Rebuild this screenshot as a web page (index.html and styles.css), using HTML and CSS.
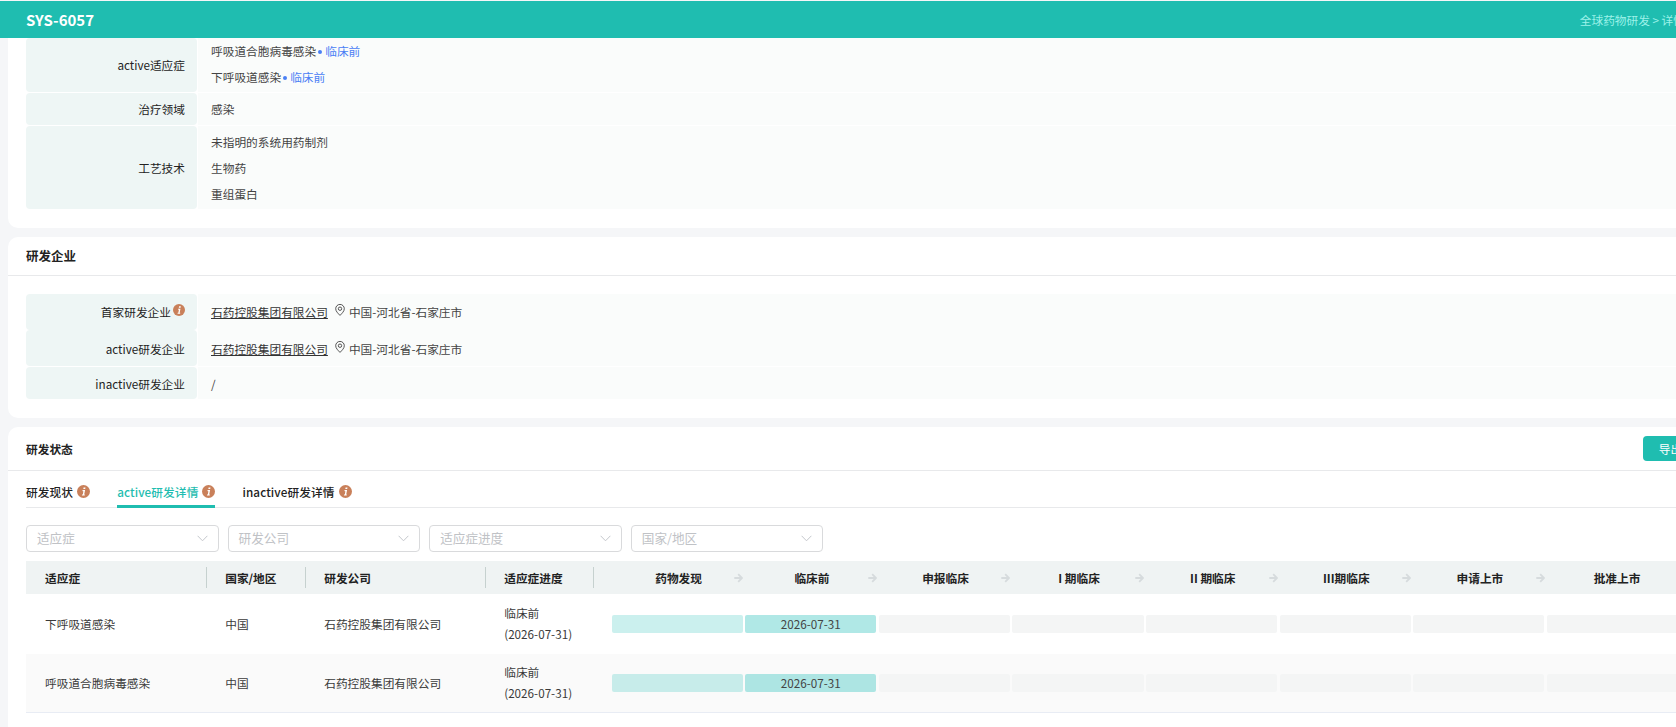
FILE: index.html
```html
<!DOCTYPE html>
<html lang="zh-CN">
<head>
    <meta charset="UTF-8">
    <meta name="viewport" content="width=device-width, initial-scale=1.0">
    <title>SYS-6057</title>
    <link rel="stylesheet" href="styles.css">
</head>
<body>
    <svg class="icon-defs" width="0" height="0">
        <defs>
            <symbol id="info" viewBox="0 0 13 13">
                <circle cx="6.5" cy="6.5" r="6.5" fill="#c9805a"/>
                <path d="M6.6 2.4h1.9l-.3 1.6H6.3zM5.4 5.1h2.7L7.2 9.4h.7l-.2 1.2H4.9l.2-1.2h.7l.6-3.1h-.7z" fill="#fff"/>
            </symbol>
            <symbol id="pin" viewBox="0 0 10 12">
                <path d="M5 11.4C3 9.3.7 7.3.7 4.7a4.3 4.3 0 0 1 8.6 0c0 2.6-2.3 4.6-4.3 6.7z" fill="none" stroke="#444" stroke-width=".9"/>
                <circle cx="5" cy="4.7" r="1.7" fill="none" stroke="#444" stroke-width=".9"/>
            </symbol>
            <symbol id="arrow" viewBox="0 0 9 10">
                <path d="M.3 5h7M4.2 1.2 8 5 4.2 8.8" fill="none" stroke="#d6dbdd" stroke-width="1.8"/>
            </symbol>
            <symbol id="chevron" viewBox="0 0 11 7">
                <path d="M.6.8 5.5 5.8 10.4.8" fill="none" stroke="#c4c7cc"/>
            </symbol>
        </defs>
    </svg>

    <div class="page">
        <header class="topbar">
            <span class="topbar-title">SYS-6057</span>
            <span class="breadcrumb">全球药物研发 &gt; 详情</span>
        </header>

        <section class="card card-first">
            <div class="desc">
                <div class="desc-row row-indication">
                    <div class="desc-label">active适应症</div>
                    <div class="desc-value stacked">
                        <div>呼吸道合胞病毒感染<i class="dot"></i><span class="stage-link">临床前</span></div>
                        <div>下呼吸道感染<i class="dot"></i><span class="stage-link">临床前</span></div>
                    </div>
                </div>
                <div class="desc-row row-area">
                    <div class="desc-label">治疗领域</div>
                    <div class="desc-value">感染</div>
                </div>
                <div class="desc-row row-tech">
                    <div class="desc-label">工艺技术</div>
                    <div class="desc-value stacked">
                        <div>未指明的系统用药制剂</div>
                        <div>生物药</div>
                        <div>重组蛋白</div>
                    </div>
                </div>
            </div>
        </section>

        <section class="card card-company">
            <div class="card-head">
                <h2 class="title-company">研发企业</h2>
            </div>
            <div class="desc desc-company">
                <div class="desc-row row-company joined">
                    <div class="desc-label">首家研发企业<svg class="info-small"><use href="#info"/></svg></div>
                    <div class="desc-value">
                        <a class="company-link">石药控股集团有限公司</a>
                        <svg class="pin"><use href="#pin"/></svg>
                        <span>中国-河北省-石家庄市</span>
                    </div>
                </div>
                <div class="desc-row row-company">
                    <div class="desc-label">active研发企业</div>
                    <div class="desc-value">
                        <a class="company-link">石药控股集团有限公司</a>
                        <svg class="pin"><use href="#pin"/></svg>
                        <span>中国-河北省-石家庄市</span>
                    </div>
                </div>
                <div class="desc-row row-inactive">
                    <div class="desc-label">inactive研发企业</div>
                    <div class="desc-value">/</div>
                </div>
            </div>
        </section>

        <section class="card card-status">
            <div class="card-head head-status">
                <h2>研发状态</h2>
                <button class="export-btn">导出</button>
            </div>

            <div class="tabs">
                <div class="tab">研发现状<svg class="info-icon"><use href="#info"/></svg></div>
                <div class="tab active">active研发详情<svg class="info-icon"><use href="#info"/></svg></div>
                <div class="tab">inactive研发详情<svg class="info-icon"><use href="#info"/></svg></div>
            </div>

            <div class="filters">
                <div class="select"><span class="placeholder">适应症</span><svg class="chevron"><use href="#chevron"/></svg></div>
                <div class="select"><span class="placeholder">研发公司</span><svg class="chevron"><use href="#chevron"/></svg></div>
                <div class="select"><span class="placeholder">适应症进度</span><svg class="chevron"><use href="#chevron"/></svg></div>
                <div class="select"><span class="placeholder">国家/地区</span><svg class="chevron"><use href="#chevron"/></svg></div>
            </div>

            <table class="progress-table">
                <colgroup>
                    <col class="col-indication">
                    <col class="col-country">
                    <col class="col-company">
                    <col class="col-progress">
                    <col class="col-stage-first">
                    <col class="col-stage" span="7">
                </colgroup>
                <thead>
                    <tr>
                        <th><div class="th-text sep">适应症</div></th>
                        <th><div class="th-text sep">国家/地区</div></th>
                        <th><div class="th-text sep">研发公司</div></th>
                        <th><div class="th-text sep">适应症进度</div></th>
                        <th class="stage-first"><div class="th-stage"><span></span><span>药物发现</span><svg class="arrow"><use href="#arrow"/></svg></div></th>
                        <th><div class="th-stage"><span></span><span>临床前</span><svg class="arrow"><use href="#arrow"/></svg></div></th>
                        <th><div class="th-stage"><span></span><span>申报临床</span><svg class="arrow"><use href="#arrow"/></svg></div></th>
                        <th><div class="th-stage"><span></span><span>I 期临床</span><svg class="arrow"><use href="#arrow"/></svg></div></th>
                        <th><div class="th-stage"><span></span><span>II 期临床</span><svg class="arrow"><use href="#arrow"/></svg></div></th>
                        <th><div class="th-stage"><span></span><span>III期临床</span><svg class="arrow"><use href="#arrow"/></svg></div></th>
                        <th><div class="th-stage"><span></span><span>申请上市</span><svg class="arrow"><use href="#arrow"/></svg></div></th>
                        <th class="stage-last"><div class="th-stage"><span></span><span>批准上市</span></div></th>
                    </tr>
                </thead>
                <tbody>
                    <tr>
                        <td class="cell-text">下呼吸道感染</td>
                        <td class="cell-text">中国</td>
                        <td class="cell-text">石药控股集团有限公司</td>
                        <td class="cell-text">临床前<br>(2026-07-31)</td>
                        <td class="stage-first"><div class="bar done"></div></td>
                        <td><div class="bar current">2026-07-31</div></td>
                        <td><div class="bar"></div></td>
                        <td><div class="bar"></div></td>
                        <td><div class="bar"></div></td>
                        <td><div class="bar"></div></td>
                        <td><div class="bar"></div></td>
                        <td><div class="bar"></div></td>
                    </tr>
                    <tr class="striped">
                        <td class="cell-text">呼吸道合胞病毒感染</td>
                        <td class="cell-text">中国</td>
                        <td class="cell-text">石药控股集团有限公司</td>
                        <td class="cell-text">临床前<br>(2026-07-31)</td>
                        <td class="stage-first"><div class="bar done"></div></td>
                        <td><div class="bar current">2026-07-31</div></td>
                        <td><div class="bar"></div></td>
                        <td><div class="bar"></div></td>
                        <td><div class="bar"></div></td>
                        <td><div class="bar"></div></td>
                        <td><div class="bar"></div></td>
                        <td><div class="bar"></div></td>
                    </tr>
                </tbody>
            </table>
        </section>
    </div>
</body>
</html>
```

FILE: styles.css
```css
html, body {
    margin: 0;
    height: 727px;
    overflow: hidden;
}

body {
    background-color: #f5f6f8;
    font-family: "Noto Sans CJK SC", "Noto Sans", sans-serif;
    font-size: 11.7px;
    color: #444;
}

.icon-defs {
    display: block;
    height: 0;
}

.page {
    width: 1714px;
    padding-top: 1px;
}

/* top bar */
.topbar {
    display: flex;
    align-items: center;
    justify-content: space-between;
    height: 37px;
    padding: 0 29px 0 26px;
    background-color: #1fbdb0;
}

.topbar-title {
    color: #fff;
    font-size: 15px;
    font-weight: 700;
}

.breadcrumb {
    color: #9cf2e9;
    font-size: 11.7px;
}

/* cards */
.card {
    margin: 0 0 9px 8px;
    background-color: #fff;
    border-radius: 10px;
}

.card-first {
    height: 190px;
    padding: 0 0 0 18px;
    border-radius: 0 0 10px 10px;
}

.card-company {
    height: 181px;
}

.card-status {
    height: 320px;
    border-radius: 10px 10px 0 0;
}

.card-head {
    display: flex;
    align-items: center;
    justify-content: space-between;
    height: 38px;
    padding: 0 16px 0 18px;
    border-bottom: 1px solid #e8e9eb;
}

.card-head h2 {
    margin: 0;
    color: #222;
    font-size: 11.7px;
    font-weight: 700;
}

.card-head .title-company {
    padding-bottom: 2px;
    font-size: 12.5px;
}

.head-status {
    height: 43px;
}

.export-btn {
    width: 55px;
    height: 25px;
    padding: 0;
    border: none;
    border-radius: 4px;
    background-color: #1fbdb0;
    color: #fff;
    font-family: inherit;
    font-size: 11.7px;
}

/* description rows */
.desc-company {
    margin: 18px 0 0 18px;
}

.desc-row {
    display: flex;
    margin-bottom: 1px;
}

.desc-row.joined {
    margin-bottom: 0;
}

.row-indication { height: 54px; }
.row-area { height: 32px; }
.row-tech { height: 83px; }
.row-company { height: 36px; }
.row-inactive { height: 32px; }

.desc-label {
    display: flex;
    align-items: center;
    justify-content: flex-end;
    flex: none;
    width: 159px;
    padding-right: 12px;
    margin-right: 1px;
    background-color: #eef6f5;
    border-radius: 4px;
    color: #222;
}

.desc-value {
    display: flex;
    align-items: center;
    flex: 1;
    padding-left: 13px;
    background-color: #fafcfb;
    color: #444;
}

.desc-value.stacked {
    flex-direction: column;
    align-items: flex-start;
    justify-content: center;
    line-height: 26px;
}

.row-indication .desc-label,
.row-indication .desc-value,
.row-area .desc-label,
.row-area .desc-value,
.joined .desc-label,
.joined .desc-value {
    padding-bottom: 2px;
}

.dot {
    display: inline-block;
    width: 4px;
    height: 4px;
    margin: 0 3px 1px 2px;
    border-radius: 50%;
    background-color: #4a80f5;
    vertical-align: middle;
}

.stage-link {
    color: #4a80f5;
}

.company-link {
    color: #333;
    text-decoration: underline;
}

.pin {
    width: 10px;
    height: 12px;
    margin: -2px 4px 0 7px;
}

.info-small {
    width: 12px;
    height: 12px;
    margin: -3px 0 0 2px;
}

/* tabs and filters */
.tabs {
    display: flex;
    gap: 27px;
    height: 36px;
    margin: 0 0 0 18px;
    border-bottom: 1px solid #e8e9eb;
}

.tab {
    display: flex;
    align-items: center;
    box-sizing: border-box;
    height: 37px;
    padding-top: 4px;
    color: #222;
    font-weight: 500;
    letter-spacing: 0.1px;
}

.tab.active {
    border-bottom: 3px solid #1fbdb0;
    padding-top: 7px;
    color: #1fbdb0;
}

.info-icon {
    width: 13px;
    height: 13px;
    margin-left: 4px;
}

.filters {
    display: flex;
    gap: 9px;
    margin: 17px 0 9px 18px;
}

.select {
    display: flex;
    align-items: center;
    justify-content: space-between;
    box-sizing: border-box;
    width: 192.6px;
    height: 27px;
    padding: 0 10px;
    border: 1px solid #d9dadc;
    border-radius: 4px;
    color: #c0c2c6;
    font-size: 12.6px;
}

.placeholder {
    padding-bottom: 3px;
}

.chevron {
    width: 11px;
    height: 7px;
}

/* progress table */
.progress-table {
    width: 1654.4px;
    margin-left: 18px;
    border-collapse: collapse;
    table-layout: fixed;
}

.col-indication { width: 181.2px; }
.col-country { width: 99px; }
.col-company { width: 180px; }
.col-progress { width: 107.8px; }
.col-stage-first { width: 151.2px; }
.col-stage { width: 133.6px; }

.progress-table th {
    height: 33px;
    padding: 0;
    background-color: #eff3f3;
    color: #222;
    font-weight: 700;
    text-align: left;
}

.th-text {
    height: 21px;
    padding-left: 18px;
    line-height: 21px;
}

.progress-table th:first-child .th-text {
    padding-left: 19px;
}

.th-text.sep {
    border-right: 1px solid #c6d1cf;
}

.th-stage {
    display: grid;
    grid-template-columns: 1fr auto 1fr;
    align-items: center;
    height: 21px;
}

.stage-last .th-stage {
    padding-left: 7px;
}

.arrow {
    justify-self: end;
    width: 9px;
    height: 10px;
    margin: 1px 2px 0 0;
}

.progress-table td {
    height: 58px;
    padding: 0;
}

.progress-table tbody tr:first-child td {
    height: 60px;
}

.progress-table tbody tr:last-child td {
    border-bottom: 1px solid #e8ecf4;
}

.striped td {
    background-color: #fafafa;
}

.progress-table .cell-text {
    padding-left: 18px;
    color: #3a3a3a;
    line-height: 20.7px;
}

.progress-table .cell-text:first-child {
    padding-left: 19px;
}

.progress-table .stage-first {
    padding-left: 18px;
}

.bar {
    height: 18px;
    margin-right: 2.4px;
    border-radius: 2px;
    background-color: #f4f5f5;
    color: #444;
    line-height: 18px;
    text-align: center;
}

.bar.done {
    background-color: #cbf0ee;
}

.bar.current {
    background-color: #b0e8e6;
}

.striped .bar.done {
    background-color: #c7ecea;
}

.striped .bar.current {
    background-color: #ade5e3;
}
```
